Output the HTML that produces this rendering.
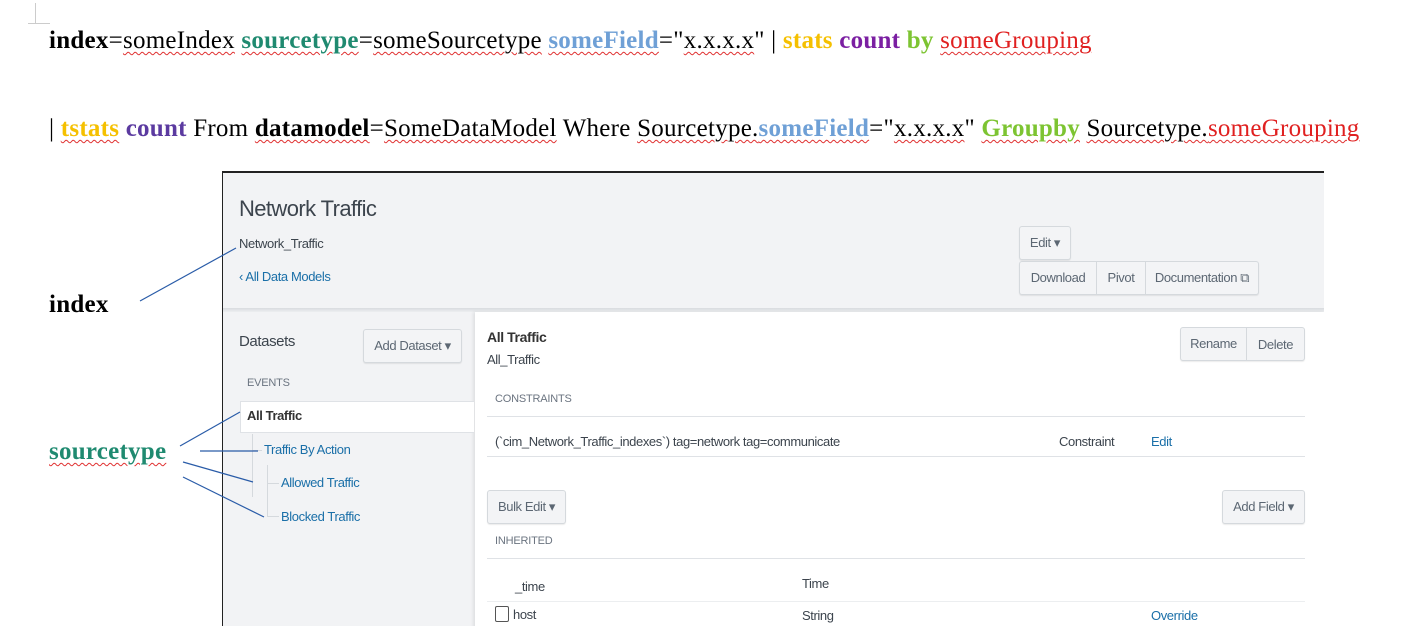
<!DOCTYPE html>
<html><head><meta charset="utf-8"><style>
*{margin:0;padding:0;box-sizing:border-box}
body{width:1407px;height:642px;background:#fff;position:relative;overflow:hidden;font-family:"Liberation Sans",sans-serif}
.doc{position:absolute;font-family:"Liberation Serif",serif;font-size:25px;color:#000;white-space:nowrap;letter-spacing:0.25px}
.sq{text-decoration:underline wavy #e03030;text-decoration-thickness:1px;text-underline-offset:3px}
b{font-weight:bold}
.a{position:absolute;white-space:nowrap}
.ui{font-family:"Liberation Sans",sans-serif;font-size:13px;color:#3c444d;letter-spacing:-0.4px}
.lnk{color:#1a6fa8}
.btn{position:absolute;border:1px solid #d5d9dd;background:#f3f4f6;border-radius:3px;font-size:13px;color:#5c6773;letter-spacing:-0.4px;display:flex;align-items:center;justify-content:center;box-shadow:0 1px 1px rgba(0,0,0,.08)}
.hr{position:absolute;height:1px;background:#dfe2e6}
.cap{font-size:11px;color:#6b7480;letter-spacing:-0.2px}
</style></head><body>
<div style="position:absolute;left:28px;top:3px;width:8px;height:21px;border-right:1px solid #ccc;border-bottom:1px solid #ccc"></div>
<div style="position:absolute;left:36px;top:23px;width:14px;border-top:1px solid #ccc"></div>

<div class="doc" style="left:49px;top:27px"><b>index</b>=<span class="sq">someIndex</span> <b class="sq" style="color:#1f8a70">sourcetype</b>=<span class="sq">someSourcetype</span> <b class="sq" style="color:#6fa0d6">someField</b>="<span class="sq">x.x.x.x</span>" | <b style="color:#f5c000">stats</b> <b style="color:#7b1fa2">count</b> <b style="color:#7dc432">by</b> <span class="sq" style="color:#e02020">someGrouping</span></div>
<div class="doc" style="left:49px;top:115px">| <b class="sq" style="color:#f5c000">tstats</b> <b style="color:#5b3aa0">count</b> From <b class="sq">datamodel</b>=<span class="sq">SomeDataModel</span> Where <span class="sq">Sourcetype.</span><b class="sq" style="color:#6fa0d6">someField</b>="<span class="sq">x.x.x.x</span>" <b class="sq" style="color:#7dc432">Groupby</b> <span class="sq">Sourcetype.</span><span class="sq" style="color:#e02020">someGrouping</span></div>

<div class="doc" style="left:49px;top:291px"><b>index</b></div>
<div class="doc" style="left:49px;top:438px"><b class="sq" style="color:#1f8a70">sourcetype</b></div>

<div style="position:absolute;left:222px;top:171px;width:1102px;height:455px;background:#f2f3f5;border-left:1px solid #222;border-top:2px solid #222;overflow:hidden">
  <div style="position:absolute;left:0;top:135px;width:1102px;height:4px;background:linear-gradient(#d8dbdf,#eceef0)"></div>
  <div style="position:absolute;left:252px;top:139px;width:850px;height:320px;background:#fff;box-shadow:-2px 0 3px rgba(0,0,0,.08)"></div>
</div>
<div class="a ui" style="left:239px;top:196px;font-size:22px;color:#3c444d;letter-spacing:-0.6px">Network Traffic</div>
<div class="a ui" style="left:239px;top:236px">Network_Traffic</div>
<div class="a ui lnk" style="left:239px;top:269px">‹ All Data Models</div>
<div class="btn" style="left:1019px;top:226px;width:52px;height:34px">Edit ▾</div>
<div class="btn" style="left:1019px;top:261px;width:240px;height:34px;justify-content:flex-start">
  <span style="width:77px;text-align:center;border-right:1px solid #d5d9dd;line-height:32px">Download</span>
  <span style="width:49px;text-align:center;border-right:1px solid #d5d9dd;line-height:32px">Pivot</span>
  <span style="flex:1;text-align:center">Documentation ⧉</span>
</div>

<div class="a ui" style="left:239px;top:333px;font-size:15px;color:#3c444d">Datasets</div>
<div class="btn" style="left:363px;top:329px;width:99px;height:34px">Add Dataset ▾</div>
<div class="a ui cap" style="left:247px;top:377px">EVENTS</div>
<div style="position:absolute;left:240px;top:401px;width:234px;height:32px;background:#fff;border:1px solid #dfe2e6;border-right:none"></div>
<div class="a ui" style="left:247px;top:408px;font-weight:bold;color:#333">All Traffic</div>
<div style="position:absolute;left:252px;top:434px;width:1px;height:63px;background:#d5d9dd"></div>
<div style="position:absolute;left:252px;top:450px;width:10px;height:1px;background:#d5d9dd"></div>
<div class="a ui lnk" style="left:264px;top:442px">Traffic By Action</div>
<div style="position:absolute;left:267px;top:465px;width:1px;height:52px;background:#d5d9dd"></div>
<div style="position:absolute;left:267px;top:483px;width:12px;height:1px;background:#d5d9dd"></div>
<div style="position:absolute;left:267px;top:516px;width:12px;height:1px;background:#d5d9dd"></div>
<div class="a ui lnk" style="left:281px;top:475px">Allowed Traffic</div>
<div class="a ui lnk" style="left:281px;top:509px">Blocked Traffic</div>

<div class="a ui" style="left:487px;top:329px;font-weight:bold;font-size:14px;color:#333">All Traffic</div>
<div class="a ui" style="left:487px;top:352px">All_Traffic</div>
<div class="btn" style="left:1180px;top:327px;width:125px;height:34px;justify-content:flex-start">
  <span style="width:66px;text-align:center;border-right:1px solid #d5d9dd;line-height:32px">Rename</span>
  <span style="flex:1;text-align:center">Delete</span>
</div>
<div class="a ui cap" style="left:495px;top:393px">CONSTRAINTS</div>
<div class="hr" style="left:487px;top:416px;width:818px"></div>
<div class="a ui" style="left:495px;top:434px">(`cim_Network_Traffic_indexes`) tag=network tag=communicate</div>
<div class="a ui" style="left:1059px;top:434px">Constraint</div>
<div class="a ui lnk" style="left:1151px;top:434px">Edit</div>
<div class="hr" style="left:487px;top:456px;width:818px"></div>
<div class="btn" style="left:487px;top:490px;width:79px;height:34px">Bulk Edit ▾</div>
<div class="btn" style="left:1222px;top:490px;width:83px;height:34px">Add Field ▾</div>
<div class="a ui cap" style="left:495px;top:535px">INHERITED</div>
<div class="hr" style="left:487px;top:558px;width:818px"></div>
<div class="a ui" style="left:515px;top:579px">_time</div>
<div class="a ui" style="left:802px;top:576px">Time</div>
<div class="hr" style="left:487px;top:601px;width:818px;background:#eceef0"></div>
<div style="position:absolute;left:495px;top:606px;width:14px;height:16px;border:1px solid #555;border-radius:2px"></div>
<div class="a ui" style="left:513px;top:607px">host</div>
<div class="a ui" style="left:802px;top:608px">String</div>
<div class="a ui lnk" style="left:1151px;top:608px">Override</div>

<svg style="position:absolute;left:0;top:0" width="1407" height="642">
 <g stroke="#2a5ca8" stroke-width="1.2" fill="none">
  <line x1="140" y1="301" x2="236" y2="248"/>
  <line x1="180" y1="446" x2="240" y2="412"/>
  <line x1="200" y1="451" x2="258" y2="451"/>
  <line x1="183" y1="462" x2="253" y2="482"/>
  <line x1="183" y1="477" x2="264" y2="517"/>
 </g>
</svg>
</body></html>
